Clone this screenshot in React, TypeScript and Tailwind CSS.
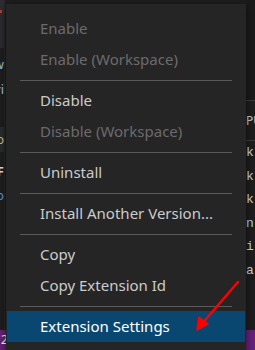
import React from "react";

type Item = { label: string; disabled?: boolean; active?: boolean } | "sep";

const items: Item[] = [
  { label: "Enable", disabled: true },
  { label: "Enable (Workspace)", disabled: true },
  "sep",
  { label: "Disable" },
  { label: "Disable (Workspace)", disabled: true },
  "sep",
  { label: "Uninstall" },
  "sep",
  { label: "Install Another Version..." },
  "sep",
  { label: "Copy" },
  { label: "Copy Extension Id" },
  "sep",
  { label: "Extension Settings", active: true },
];

function Backdrop() {
  return (
    <div className="flex h-[350px] w-[255px] flex-col bg-[#1e1e1e] font-['Noto_Sans',sans-serif]">
      <div className="flex min-h-0 flex-1">
        {/* left: extensions list, mostly hidden */}
        <div className="flex w-[5px] flex-col overflow-hidden border-r border-[#2b2b2b]">
          <div className="h-[48px] shrink-0 bg-[#2c2c32] pt-[10px]">
            <div className="h-[3px] w-[2px] bg-[#c0392b]" />
          </div>
          <div className="flex flex-col items-end pt-[4px] text-[13px] leading-[25px] text-[#9cc8e8]">
            <div className="whitespace-nowrap">ew</div>
            <div className="whitespace-nowrap">vi</div>
          </div>
          <div className="mt-[25px] flex h-[25px] shrink-0 items-center justify-end bg-[#2a2d2e] text-[13px] text-[#d7ba7d]">
            o
          </div>
          <div className="flex flex-col items-end pt-[7px] text-[13px] leading-[24px]">
            <div className="font-bold text-[#e0e0e0]">F</div>
            <div className="text-[#4fa3e0]">b</div>
          </div>
        </div>
        <div className="flex-1" />
        {/* right: editor text peeking out */}
        <div className="flex w-[9px] flex-col overflow-hidden font-['Liberation_Mono',monospace] text-[13px]">
          <div className="h-[101px] shrink-0 border-b border-[#3c3c3c] bg-[#1b1b1b]" />
          <div className="flex h-[40px] shrink-0 items-center border-b border-[#3c3c3c] font-['Noto_Sans',sans-serif] text-[12px] text-[#cccccc]">
            PU
          </div>
          <div className="flex flex-col pt-[0px] leading-[23.5px] text-[#d4d4d4]">
            <div>k</div>
            <div>k</div>
            <div>k</div>
            <div className="text-[#9cdcfe]">n</div>
            <div>i</div>
            <div>a</div>
          </div>
        </div>
      </div>
      <div className="flex h-[20px] shrink-0 items-center bg-[#68217a] pl-[1px] font-['Noto_Sans',sans-serif] text-[12px] text-white">
        2
      </div>
    </div>
  );
}

export default function App() {
  return (
    <div className="relative h-[350px] w-[255px] overflow-hidden">
      <Backdrop />
      <div className="absolute left-[6px] top-[4px] w-[240px] bg-[#252526] pt-[9px] pb-[12px] font-['Noto_Sans',sans-serif] text-[15px] shadow-[0_2px_8px_rgba(0,0,0,0.6)]">
        {items.map((it, i) =>
          it === "sep" ? (
            <div key={i} className="h-[10px] pt-[5px]">
              <div className="ml-[14px] mr-[14px] h-px bg-[#5a5a5a]" />
            </div>
          ) : (
            <div
              key={i}
              className={
                "mx-[1px] flex h-[31px] items-center pl-[33px] whitespace-nowrap " +
                (it.active
                  ? "bg-[#094771] text-white"
                  : it.disabled
                  ? "text-[#6b6b6b]"
                  : "text-[#cccccc]")
              }
            >
              {it.label}
            </div>
          )
        )}
      </div>
      <svg className="absolute left-0 top-0" width="255" height="350" viewBox="0 0 255 350">
        <line x1="238" y1="282" x2="201" y2="325" stroke="#ff0000" strokeWidth="2.5" strokeLinecap="round" />
        <polygon points="197,330 199,317 208,324" fill="#ff0000" stroke="#ff0000" strokeWidth="1.5" strokeLinejoin="round" />
      </svg>
    </div>
  );
}
